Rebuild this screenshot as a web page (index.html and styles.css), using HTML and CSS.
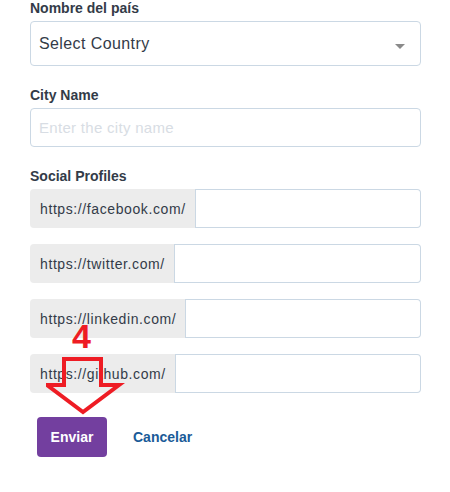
FILE: index.html
```html
<!DOCTYPE html>
<html>
<head>
<meta charset="utf-8">
<link rel="stylesheet" href="styles.css">
</head>
<body>
<form class="form">
  <div class="field">
    <label class="label">Nombre del país</label>
    <div class="select">
      <span>Select Country</span>
      <span class="caret"></span>
    </div>
  </div>
  <div class="field">
    <label class="label">City Name</label>
    <div class="input"><span class="placeholder">Enter the city name</span></div>
  </div>
  <div class="field">
    <label class="label">Social Profiles</label>
    <div class="groups">
      <div class="group"><span class="addon">https://facebook.com/</span><span class="grow"></span></div>
      <div class="group"><span class="addon">https://twitter.com/</span><span class="grow"></span></div>
      <div class="group"><span class="addon">https://linkedin.com/</span><span class="grow"></span></div>
      <div class="group"><span class="addon">https://github.com/</span><span class="grow"></span></div>
    </div>
  </div>
  <div class="actions">
    <button type="button" class="btn">Enviar</button>
    <a class="cancel">Cancelar</a>
  </div>
</form>
<div class="annot">
  <span class="num">4</span>
  <svg class="arrow" width="80" height="62" viewBox="0 0 80 62">
    <polygon points="18,4 55,4 55,30 73,30 37,57 1,30 18,30" fill="none" stroke="#ee1c24" stroke-width="4" stroke-linejoin="miter"/>
  </svg>
</div>
</body>
</html>
```
FILE: styles.css
```css
* { box-sizing: border-box; }
body {
  margin: 0;
  background: #fff;
  font-family: "Liberation Sans", Arial, sans-serif;
  position: relative;
}
.form {
  width: 421px;
  padding: 0 0 0 30px;
  display: flex;
  flex-direction: column;
  gap: 21px;
}
.label {
  display: block;
  font-weight: bold;
  font-size: 14px;
  line-height: 16px;
  color: #333b48;
  margin-bottom: 5px;
}
.select {
  height: 45px;
  border: 1px solid #cbd8e4;
  border-radius: 4px;
  display: flex;
  align-items: center;
  justify-content: space-between;
  padding: 0 15px 0 8px;
  font-size: 16px;
  letter-spacing: 0.4px;
  color: #333b48;
}
.caret {
  width: 0;
  height: 0;
  border-left: 5px solid transparent;
  border-right: 5px solid transparent;
  border-top: 5px solid #8a8a8a;
  margin-top: 5px;
}
.input {
  height: 39px;
  border: 1px solid #cbd8e4;
  border-radius: 4px;
  display: flex;
  align-items: center;
  padding: 0 8px;
  font-size: 15px;
  letter-spacing: 0.3px;
}
.placeholder { color: #d8dde4; }
.groups {
  display: flex;
  flex-direction: column;
  gap: 16px;
}
.group {
  height: 39px;
  display: flex;
  border-radius: 4px;
}
.addon {
  background: #ececec;
  border-radius: 4px 0 0 4px;
  display: flex;
  align-items: center;
  padding: 0 9px 0 10px;
  font-size: 14px;
  letter-spacing: 0.6px;
  color: #333b48;
  border-right: 1px solid #cbd8e4;
}
.grow {
  flex: 1;
  border: 1px solid #cbd8e4;
  border-left: none;
  border-radius: 0 4px 4px 0;
}
.actions {
  display: flex;
  align-items: center;
  gap: 26px;
  margin-top: 3px;
  padding-left: 7px;
}
.btn {
  width: 70px;
  height: 40px;
  background: #733f9f;
  color: #fff;
  border: none;
  border-radius: 4px;
  font-family: "Liberation Sans", Arial, sans-serif;
  font-weight: bold;
  font-size: 14px;
  padding: 0;
}
.cancel {
  color: #1a5b98;
  font-weight: bold;
  font-size: 14px;
}
.annot {
  position: absolute;
  left: 0;
  top: 0;
  width: 0;
  height: 0;
}
.num {
  position: absolute;
  left: 72px;
  top: 318px;
  font-weight: bold;
  font-size: 34px;
  line-height: 36px;
  color: #ee1c24;
}
.arrow {
  position: absolute;
  left: 46px;
  top: 355px;
}
```
